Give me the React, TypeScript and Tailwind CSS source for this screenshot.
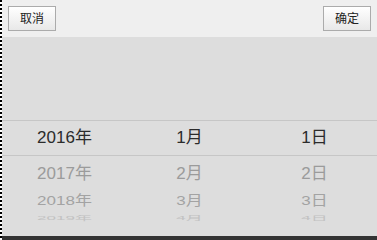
import * as React from "react"

type Row = {
  years: string
  months: string
  days: string
}

const rows: (Row & { h: string; text: string })[] = [
  { years: "2017年", months: "2月", days: "2日", h: "h-[34px]", text: "text-[#9b9b9b] scale-y-[0.97]" },
  { years: "2018年", months: "3月", days: "3日", h: "h-[20px]", text: "text-[#a3a3a3] scale-y-[0.8]" },
  { years: "2019年", months: "4月", days: "4日", h: "h-[16px]", text: "text-[#c2c2c2] scale-y-[0.32]" },
]

function PickerButton({ label }: { label: string }) {
  return (
    <button
      type="button"
      className="mt-[6px] flex h-[25px] w-[48px] items-center justify-center border border-[#ababab] bg-gradient-to-b from-white to-[#e8e8e8] text-[12px] text-[#222]"
    >
      {label}
    </button>
  )
}

export default function App() {
  return (
    <div
      className="flex h-[240px] w-[377px] bg-white"
      style={{ fontFamily: '"Liberation Sans", "Noto Sans CJK SC", sans-serif' }}
    >
      {/* dashed frame edge */}
      <div className="w-[2px] shrink-0 bg-[repeating-linear-gradient(to_bottom,#000_0px,#000_2px,#fff_2px,#fff_4px)]" />

      <div className="flex min-w-0 flex-1 flex-col">
        <div className="flex h-[37px] shrink-0 items-start justify-between bg-[#efefef] pl-[6px] pr-[6px]">
          <PickerButton label="取消" />
          <PickerButton label="确定" />
        </div>

        <div className="flex flex-1 flex-col bg-[#dddddd]">
          <div className="h-[83px] shrink-0" />
          <div className="grid h-[36px] shrink-0 grid-cols-3 items-center border-y border-[#c6c6c6] text-center text-[17px] text-[#2b2b2b]">
            <span>2016年</span>
            <span>1月</span>
            <span>1日</span>
          </div>
          {rows.map((r) => (
            <div
              key={r.years}
              className={`grid shrink-0 grid-cols-3 items-center overflow-hidden text-center text-[17px] leading-none ${r.h}`}
            >
              <span className={`block ${r.text}`}>{r.years}</span>
              <span className={`block ${r.text}`}>{r.months}</span>
              <span className={`block ${r.text}`}>{r.days}</span>
            </div>
          ))}
        </div>

        <div className="h-[4px] shrink-0 bg-[#333333]" />
      </div>
    </div>
  )
}
